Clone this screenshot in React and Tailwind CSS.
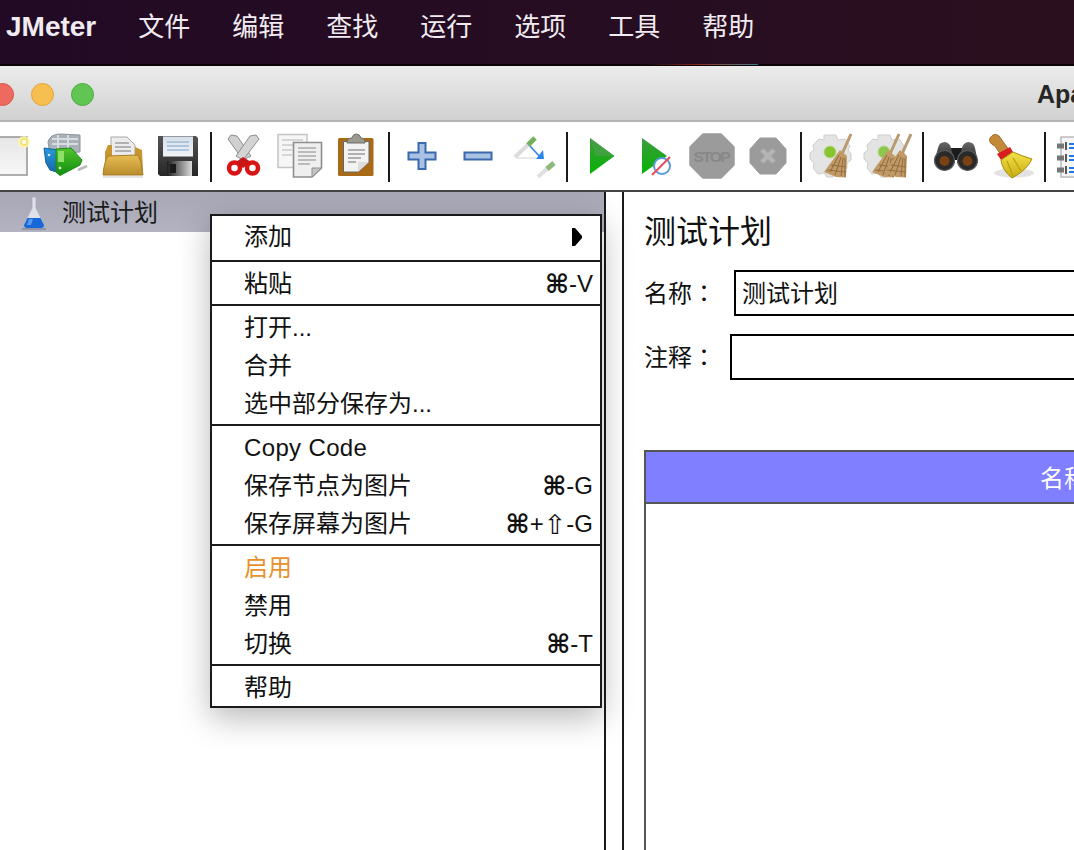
const FONT = "font-['Liberation_Sans','Noto_Sans_CJK_SC','DejaVu_Sans',sans-serif]";

function Ico({ x, w, children }) {
  return (
    <svg width={w} height={50} viewBox={`${x} 132 ${w} 50`} className="block shrink-0">
      {children}
    </svg>
  );
}

function Sep() {
  return <div className="w-[2px] h-[50px] shrink-0 bg-[#1a1a1a]" />;
}

function Grad({ id, a, b, x2 = 0, y2 = 1 }) {
  return (
    <defs>
      <linearGradient id={id} x1="0" y1="0" x2={x2} y2={y2}>
        <stop offset="0" stopColor={a} />
        <stop offset="1" stopColor={b} />
      </linearGradient>
    </defs>
  );
}

function Broom({ dx = 0 }) {
  return (
    <g transform={`translate(${dx} 0)`}>
      <path d="M851 134 L842 154" stroke="#b79a70" strokeWidth="3" />
      <path d="M840 150 L847 156 L846 177.500 L836 177 L824 172 Z" fill="#c29a68" />
      <path d="M839 155 L830 172 M841 157 L835 175 M843 158 L841 176 M845 158 L845 177 M831 165 L846 167 M827 170 L846 172" stroke="#94703f" strokeWidth="1.100" fill="none" />
    </g>
  );
}

function Gear({ cx, cy, dot = "#86c52d" }) {
  return (
    <g>
      <path
        d={`M${cx - 6} ${cy - 17} h12 l2 5 l7 -1 l5 7 l-2 4 l3 4 v6 l-4 3 l0 5 l-6 6 l-5 -1 l-3 4 h-6 l-3 -4 l-6 1 l-5 -6 l1 -5 l-4 -4 v-6 l4 -3 l-1 -5 l6 -6 l5 1 z`}
        fill="#e4e4e4"
        stroke="#cdcdcd"
        strokeWidth="1"
      />
      <circle cx={cx} cy={cy} r="6" fill={dot} stroke="#b5d88a" strokeWidth="1" />
    </g>
  );
}

function Toolbar() {
  return (
    <div className="h-[68px] shrink-0 bg-white flex items-center pt-[2px] overflow-hidden">
      <div className="ml-[-14px] flex shrink-0">
        <Ico x={-14} w={50}>
          <Grad id="n" a="#e6e6e6" b="#f8f8f8" />
          <rect x="-8" y="137" width="35" height="38" fill="url(#n)" stroke="#9a9a9a" strokeWidth="1.600" />
          <circle cx="24" cy="142" r="6" fill="#fff7a8" opacity="0.85" />
          <circle cx="24" cy="142" r="3" fill="#fffde8" stroke="#efe070" strokeWidth="1.500" />
        </Ico>
        <Ico x={36} w={58}>
          <Grad id="tb" a="#2a9ae0" b="#1565a8" />
          <Grad id="tg" a="#52c42c" b="#0f8d0f" />
          <path d="M48 142 Q50 134 60 134 L80 135 L80 152 L50 154 Z" fill="#a9b2b8" stroke="#8d959b" />
          <path d="M52 139 l26 0 M52 144 l26 0 M58 135 l0 14 M68 135 l0 14" stroke="#d9dde0" strokeWidth="2" />
          <path d="M44 148 L58 150 L60 173 L50 170 L46 163 Z" fill="url(#tb)" stroke="#155e9e" />
          <path d="M56 149 L71 148 L82 160 L80 165 L60 175.500 L56 172 Z" fill="url(#tg)" stroke="#1c8a14" />
          <rect x="58" y="151" width="6" height="11" fill="#8fe06a" />
          <circle cx="60" cy="168" r="1.400" fill="#d8f5c8" />
          <circle cx="49" cy="155" r="1.300" fill="#d0e8fa" />
          <path d="M78 170 L87 166" stroke="#bbb" strokeWidth="2.500" />
        </Ico>
        <Ico x={94} w={56}>
          <Grad id="f" a="#e8bd52" b="#b98c2c" />
          <path d="M111 137 L127 137 L135 145 L135 162 L111 162 Z" fill="#ececec" stroke="#a8a8a8" />
          <path d="M115 143 h14 M115 147 h16 M115 151 h16" stroke="#9e9e9e" strokeWidth="1.300" />
          <path d="M105 152 L108 145 L112 145 L112 156 L135 156 L135 147 L142 150 L143 172 L105 172 Z" fill="#c8962f" />
          <path d="M103 175 Q104 162 108 156 L138 155 L141 162 L143 175 Z" fill="url(#f)" stroke="#a47b2a" />
          <path d="M103 177 L143 177" stroke="#ddd" strokeWidth="1.500" />
        </Ico>
        <Ico x={150} w={60}>
          <Grad id="s" a="#555" b="#262626" />
          <Grad id="sl" a="#d5dfeb" b="#f1f4f8" />
          <Grad id="ss" a="#1f1f1f" b="#dcdcdc" x2="1" y2="0" />
          <path d="M158 136 H196 L198 138 V176 H160 L158 174 Z" fill="url(#s)" />
          <rect x="163" y="136.500" width="30" height="20" fill="url(#sl)" />
          <path d="M167 142 H189 M167 146 H189 M167 150 H189" stroke="#9fb9d5" strokeWidth="1.400" />
          <rect x="167" y="161" width="25" height="15" fill="url(#ss)" />
          <rect x="170" y="164" width="6" height="9" fill="#1a1a1a" />
        </Ico>
        <Sep />
        <Ico x={212} w={58}>
          <path d="M243 160 L228 139 L231 135 L237 136 L251 156 Z" fill="#d0d0d0" stroke="#8c8c8c" />
          <path d="M243 160 L259 139 L256 135 L250 136 L236 156 Z" fill="#d4d4d4" stroke="#8c8c8c" />
          <circle cx="234.500" cy="168" r="5.500" fill="#fff" stroke="#d81414" strokeWidth="4.500" />
          <circle cx="252.500" cy="168" r="5.500" fill="#fff" stroke="#d81414" strokeWidth="4.500" />
          <path d="M236 162 L243 157 L251 162 L243 168 Z" fill="#c91616" />
        </Ico>
        <Ico x={270} w={60}>
          <rect x="278" y="134.500" width="29" height="33" fill="#f6f6f6" stroke="#c4c4c4" strokeWidth="1.500" />
          <path d="M282 140 h21 M282 145 h21 M282 150 h10 M282 155 h10" stroke="#ccc" strokeWidth="1.300" />
          <path d="M293.500 142.500 H321.500 V168 L312 177 H293.500 Z" fill="#efefef" stroke="#8e8e8e" strokeWidth="1.600" />
          <path d="M298 148 H316 M298 152 H316 M298 156 H316 M298 160 H316 M298 164 H310" stroke="#aaa" strokeWidth="1.300" />
          <path d="M312 177 V168 H321.500 Z" fill="#c4c4c4" stroke="#8e8e8e" />
        </Ico>
        <Ico x={330} w={58}>
          <rect x="338" y="138" width="35.500" height="38" rx="1.500" fill="#a86a16" />
          <path d="M343.500 141.500 H369 V162 L358 172 H343.500 Z" fill="#f2f2f2" stroke="#666" strokeWidth="1" />
          <path d="M358 172 L358 162 L369 162 Z" fill="#ddd" />
          <path d="M348 150 H365 M348 154 H365 M348 158 H361 M348 162 H356" stroke="#9b9b9b" strokeWidth="1.400" />
          <path d="M347 143 Q347 138 352 138 Q353 134 356 134 Q360 134 361 138 Q365 138 365 143 Z" fill="#9a9a8e" stroke="#6e6e66" />
        </Ico>
        <Sep />
        <Ico x={390} w={60}>
          <path d="M418.500 143 H425.500 V152.500 H435.500 V159.500 H425.500 V169 H418.500 V159.500 H408.500 V152.500 H418.500 Z" fill="#a9c2e4" stroke="#3a69ad" strokeWidth="2" />
        </Ico>
        <Ico x={450} w={55}>
          <rect x="464.500" y="152.500" width="27" height="7" fill="#a9c2e4" stroke="#3a69ad" strokeWidth="2" />
        </Ico>
        <Ico x={505} w={61}>
          <path d="M515 157 L531 142" stroke="#dcdcdc" strokeWidth="4" />
          <path d="M528 145 L535 138" stroke="#74b05c" strokeWidth="5" />
          <path d="M516 158 L536 158" stroke="#e2e2e2" strokeWidth="1.500" />
          <path d="M530 146 L541 158" stroke="#3f8be0" strokeWidth="1.800" />
          <path d="M536 159 L544 159 L543 150 Z" fill="#2f86ea" />
          <path d="M538 177 L551 165" stroke="#e0e0e0" strokeWidth="4" />
          <path d="M547 169 L554 163" stroke="#8db97a" strokeWidth="5" />
        </Ico>
        <Sep />
        <Ico x={568} w={60}>
          <Grad id="p" a="#3f9a3f" b="#03b403" />
          <path d="M590 138 L614.500 156 L590 174 Z" fill="url(#p)" />
          <path d="M590 138 L614.500 156 L596 156 Z" fill="#4ea04e" opacity="0.6" />
        </Ico>
        <Ico x={628} w={52}>
          <Grad id="p2" a="#3f9a3f" b="#03b403" />
          <path d="M642 138 L667 156 L642 174 Z" fill="url(#p2)" />
          <circle cx="662" cy="166" r="8" fill="#fff" stroke="#5b9bd8" strokeWidth="2" />
          <path d="M652 175 L670 157" stroke="#e8495a" strokeWidth="2" />
        </Ico>
        <Ico x={680} w={60}>
          <path d="M703 134 H721 L734 147 V165 L721 178 H703 L690 165 V147 Z" fill="#9b9b9b" stroke="#9b9b9b" strokeLinejoin="round" strokeWidth="1.500" />
          <text x="712" y="162" textAnchor="middle" fontFamily="Liberation Sans" fontWeight="700" fontSize="15.500" fill="#888" textLength="37">STOP</text>
        </Ico>
        <Ico x={740} w={60}>
          <path d="M760 138 H776 L786 149 V163 L776 174 H760 L750 163 V149 Z" fill="#9b9b9b" stroke="#9b9b9b" strokeLinejoin="round" />
          <path d="M762 150 L774 162 M774 150 L762 162" stroke="#b4b4b4" strokeWidth="4.500" />
        </Ico>
        <Sep />
        <Ico x={802} w={58}>
          <Gear cx={830} cy={152} />
          <Broom />
        </Ico>
        <Ico x={860} w={62}>
          <Gear cx={884} cy={152} dot="#8ec84a" />
          <Broom dx={48} />
          <Broom dx={60} />
        </Ico>
        <Sep />
        <Ico x={924} w={58}>
          <Grad id="bi" a="#6a6a6a" b="#1c1c1c" />
          <path d="M950 148 H962 V160 H950 Z" fill="#1c1c1c" />
          <path d="M938 148 Q939 142 945 142 Q950 143 951 148 L955 163 L934 163 Z" fill="url(#bi)" />
          <path d="M962 148 Q963 143 968 142 Q974 142 975 148 L978 163 L957 163 Z" fill="url(#bi)" />
          <circle cx="944.500" cy="160.500" r="10" fill="#2a2a2a" stroke="#5e5e5e" strokeWidth="1.200" />
          <circle cx="967.500" cy="160.500" r="10" fill="#2a2a2a" stroke="#5e5e5e" strokeWidth="1.200" />
          <circle cx="944.500" cy="161" r="5" fill="#7a4212" />
          <circle cx="967.500" cy="161" r="5" fill="#7a4212" />
        </Ico>
        <Ico x={982} w={62}>
          <Grad id="b" a="#f4e24a" b="#c9ad10" />
          <ellipse cx="1014" cy="173" rx="20" ry="4.500" fill="#e2e2e2" />
          <path d="M990 138 Q994 132 999 136 L1009 150 L1001 155 L995 146 Q988 143 990 138 Z" fill="#c48a3a" stroke="#9c6a25" />
          <path d="M997 154 L1010 147 L1013 152 L1001 160 Z" fill="#d81e1e" />
          <path d="M1001 160 L1013 152 Q1022 156 1032 159 Q1027 170 1012 178 Q1002 170 1001 160 Z" fill="url(#b)" stroke="#a58c0c" />
          <path d="M1007 161 L1013 176 M1013 158 L1021 171" stroke="#b9a012" strokeWidth="1.200" />
        </Ico>
        <Sep />
        <Ico x={1046} w={54}>
          <rect x="1061" y="137" width="30" height="40" fill="#f5f5f5" stroke="#bbb" strokeWidth="1.500" />
          <path d="M1057 146 h7 M1057 158 h7 M1057 170 h7" stroke="#777" strokeWidth="5" />
          <path d="M1066 142 v8 M1066 154 v8 M1066 166 v8" stroke="#222" strokeWidth="1.500" />
          <path d="M1069 144 h8 M1069 148 h8 M1069 156 h8 M1069 160 h8 M1069 168 h8 M1069 172 h8" stroke="#1e78e8" strokeWidth="1.800" />
        </Ico>
      </div>
    </div>
  );
}

function Flask() {
  return (
    <svg width="26" height="38" viewBox="0 0 26 38" className="shrink-0">
      <path d="M11 4 H15 V15 L23 31 Q24 35 20 35 H6 Q2 35 3 31 L11 15 Z" fill="#dfe1ea" stroke="#a4a9b8" strokeWidth="0.800" />
      <path d="M6.500 25 H19.500 L23 32 Q23 35 20 35 H6 Q3 35 3 32 Z" fill="#1668d8" />
      <path d="M8 26 H12 L10 32 H6 Z" fill="#5a9aee" />
      <path d="M1 36 H25" stroke="#8a8a9c" strokeWidth="1.500" />
    </svg>
  );
}

function Cmd() {
  return <span className="font-['DejaVu_Sans'] text-[26px] leading-none font-bold">⌘</span>;
}

function Shift() {
  return <span className="font-['DejaVu_Sans'] text-[27px] leading-none">⇧</span>;
}

function Row({ label, shortcut, arrow, orange, wide }) {
  return (
    <div className="h-[38px] flex items-center pl-[32px] pr-[7px] pt-[2px] justify-between">
      <span className={orange ? "text-[#e8912c]" : wide ? "tracking-[0.35px]" : ""}>{label}</span>
      {shortcut && <span className="flex items-center">{shortcut}</span>}
      {arrow && (
        <svg width="10" height="18" viewBox="0 0 10 18" className="mr-[11px]">
          <path d="M0 0 L3 0 L10 8 L10 10 L3 18 L0 18 Z" fill="#000" />
        </svg>
      )}
    </div>
  );
}

function Line() {
  return <div className="h-[2px] bg-[#1a1a1a]" />;
}

function ContextMenu() {
  return (
    <div className="absolute left-[210px] top-[22px] w-[392px] border-2 border-[#1a1a1a] bg-white text-[#111] text-[24px] shadow-[0_10px_30px_rgba(0,0,0,0.28)]">
      <div className="pt-[1px] pb-[5px]">
        <Row label="添加" arrow />
      </div>
      <Line />
      <div className="py-[2px]">
        <Row label="粘贴" shortcut={<><Cmd />-V</>} />
      </div>
      <Line />
      <div className="py-[2px]">
        <Row label="打开..." />
        <Row label="合并" />
        <Row label="选中部分保存为..." />
      </div>
      <Line />
      <div className="py-[2px]">
        <Row label="Copy Code" wide />
        <Row label="保存节点为图片" shortcut={<><Cmd />-G</>} />
        <Row label="保存屏幕为图片" shortcut={<><Cmd />+<Shift />-G</>} />
      </div>
      <Line />
      <div className="py-[2px]">
        <Row label="启用" orange />
        <Row label="禁用" />
        <Row label="切换" shortcut={<><Cmd />-T</>} />
      </div>
      <Line />
      <div className="pt-[2px]">
        <Row label="帮助" />
      </div>
    </div>
  );
}

function Colon() {
  return <span className="font-['Noto_Sans_CJK_TC']">：</span>;
}

export default function App() {
  const menus = ["文件", "编辑", "查找", "运行", "选项", "工具", "帮助"];
  return (
    <div className={`w-[1074px] h-[850px] overflow-hidden flex flex-col bg-white ${FONT}`}>
      <div className="relative h-[66px] shrink-0 flex items-center gap-[42px] pl-[6px] pb-[10px] border-b-2 border-[#0c0308] bg-gradient-to-r from-[#220a25] to-[#2a0f1e] text-[#f0ebf0] text-[26px]">
        <span className="font-bold text-[28px]">JMeter</span>
        {menus.map((m) => (
          <span key={m}>{m}</span>
        ))}
        <div className="absolute left-[640px] bottom-[-1px] w-[118px] h-[1px] bg-gradient-to-r from-[#0c0308] via-[#8a2a10] to-[#2a7a90]" />
      </div>
      <div className="h-[56px] shrink-0 flex items-center bg-gradient-to-b from-[#ececec] to-[#d1d1d1] border-b-2 border-[#b4b4b4] pt-[2px]">
        <div className="ml-[-9px] flex gap-[17px] shrink-0">
          <div className="w-[23px] h-[23px] rounded-full bg-[#ee6a5e] border border-[#d9544a]" />
          <div className="w-[23px] h-[23px] rounded-full bg-[#f6bf4f] border border-[#dfa53a]" />
          <div className="w-[23px] h-[23px] rounded-full bg-[#61c554] border border-[#4eab42]" />
        </div>
        <span className="ml-[943px] font-bold text-[25px] leading-none text-[#262626] whitespace-nowrap">Apache JMeter</span>
      </div>
      <Toolbar />
      <div className="h-[2px] shrink-0 bg-[#444]" />
      <div className="flex-1 flex min-h-0">
        <div className="relative w-[604px] shrink-0">
          <div className="h-[40px] flex items-center gap-[15px] pl-[21px] bg-gradient-to-b from-[#a7a7b6] to-[#b3b3c1] text-[24px] text-[#1a1a1a]">
            <Flask />
            <span className="pt-[2px]">测试计划</span>
          </div>
          <ContextMenu />
        </div>
        <div className="w-[20px] shrink-0 border-x-2 border-[#1a1a1a]" />
        <div className="flex-1 min-w-0 overflow-hidden pl-[20px] text-[#111]">
          <div className="mt-[20px] h-[40px] flex items-center text-[32px] leading-none">测试计划</div>
          <div className="mt-[18px] h-[46px] flex items-center text-[24px]">
            <span className="w-[90px] shrink-0">名称<Colon /></span>
            <input
              readOnly
              value="测试计划"
              className="w-[600px] shrink-0 h-[46px] border-2 border-black pl-[6px] pb-[4px] outline-none bg-white"
            />
          </div>
          <div className="mt-[18px] h-[46px] flex items-center text-[24px]">
            <span className="w-[86px] shrink-0">注释<Colon /></span>
            <div className="w-[600px] shrink-0 h-[46px] border-2 border-black bg-white" />
          </div>
          <div className="mt-[70px] w-[840px] h-[420px] border-2 border-[#555]">
            <div className="h-[52px] bg-[#7f7fff] border-b-2 border-[#555] flex items-center justify-center pt-[3px] text-white text-[24px]">
              名称
            </div>
          </div>
        </div>
      </div>
    </div>
  );
}
